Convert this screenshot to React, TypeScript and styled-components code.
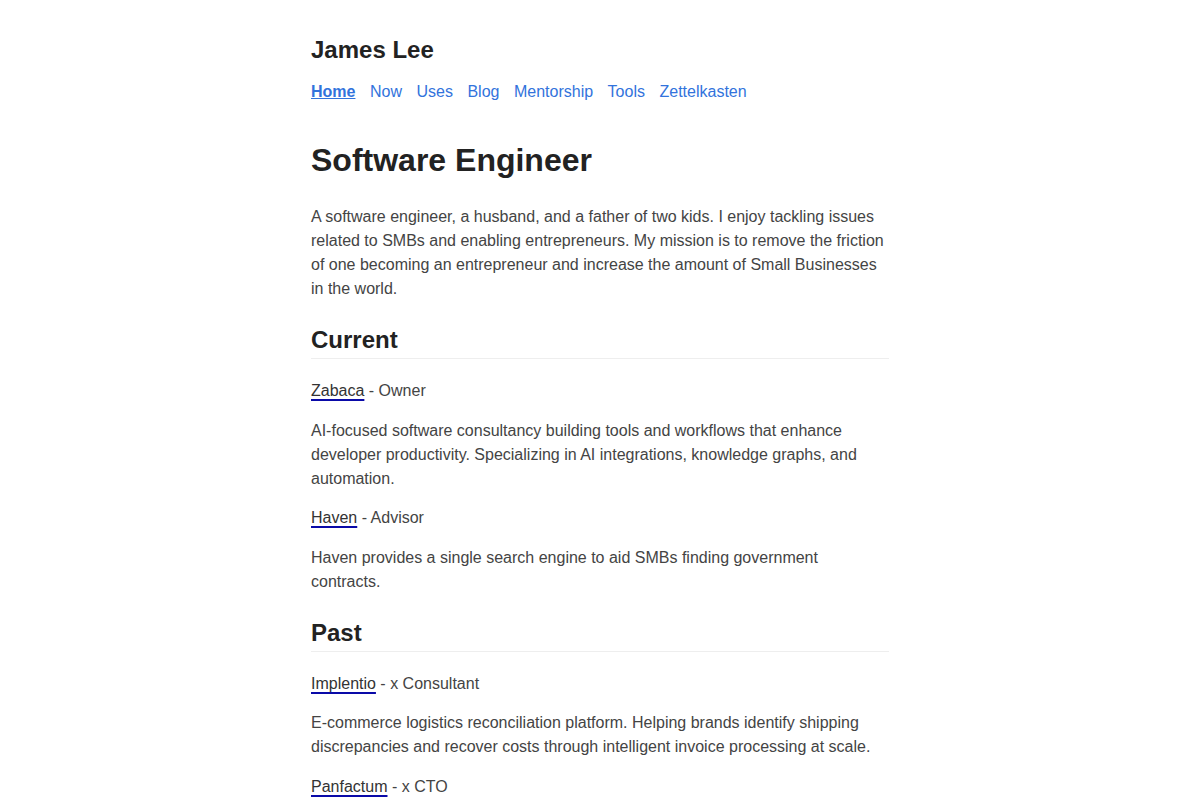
import React from 'react'
import styled, { createGlobalStyle } from 'styled-components'

const GlobalStyle = createGlobalStyle`
  html, body {
    margin: 0;
    padding: 0;
    background: #fff;
  }
  body {
    font-family: "Liberation Sans", Arial, Helvetica, sans-serif;
    font-size: 16px;
    line-height: 1.5;
    color: #444;
  }
`

const Page = styled.div`
  width: 578px;
  margin: 0 auto;
  padding: 35px 0 40px;
`

const SiteTitle = styled.div`
  font-size: 24px;
  line-height: 30px;
  font-weight: 700;
  color: #222;
  margin: 0 0 15px;
`

const Nav = styled.nav`
  display: flex;
  gap: 14.5px;
  margin-bottom: 36px;
`

const NavLink = styled.a<{ $active?: boolean }>`
  color: #3273dc;
  font-weight: ${(p) => (p.$active ? 700 : 400)};
  text-decoration: ${(p) => (p.$active ? 'underline' : 'none')};
  line-height: 24px;
`

const Title = styled.h1`
  font-size: 32px;
  line-height: 40px;
  font-weight: 700;
  color: #222;
  margin: 0 0 25px;
`

const Paragraph = styled.p`
  margin: 0 0 15.5px;
`

const Section = styled.h2`
  font-size: 24px;
  line-height: 30px;
  font-weight: 700;
  color: #222;
  margin: 24px 0 20px;
  padding-bottom: 3px;
  border-bottom: 1px solid #eee;
`

const Company = styled.a`
  color: #333;
  text-decoration: underline;
  text-decoration-color: #0a0aa8;
  text-decoration-thickness: 2px;
  text-underline-offset: 3px;
  text-decoration-skip-ink: none;
`

type Role = { name: string; role: string; text: string }

const current: Role[] = [
  {
    name: 'Zabaca',
    role: 'Owner',
    text: 'AI-focused software consultancy building tools and workflows that enhance developer productivity. Specializing in AI integrations, knowledge graphs, and automation.',
  },
  {
    name: 'Haven',
    role: 'Advisor',
    text: 'Haven provides a single search engine to aid SMBs finding government contracts.',
  },
]

const past: Role[] = [
  {
    name: 'Implentio',
    role: 'x Consultant',
    text: 'E-commerce logistics reconciliation platform. Helping brands identify shipping discrepancies and recover costs through intelligent invoice processing at scale.',
  },
  {
    name: 'Panfactum',
    role: 'x CTO',
    text: 'Open-source platform engineering framework for deploying infrastructure on AWS with Kubernetes and Terraform.',
  },
]

const navItems = ['Home', 'Now', 'Uses', 'Blog', 'Mentorship', 'Tools', 'Zettelkasten']

const RoleList = ({ items }: { items: Role[] }) => (
  <>
    {items.map((r) => (
      <React.Fragment key={r.name}>
        <Paragraph>
          <Company href="#">{r.name}</Company> - {r.role}
        </Paragraph>
        <Paragraph>{r.text}</Paragraph>
      </React.Fragment>
    ))}
  </>
)

export default function App() {
  return (
    <>
      <GlobalStyle />
      <Page>
        <SiteTitle>James Lee</SiteTitle>
        <Nav>
          {navItems.map((n, i) => (
            <NavLink key={n} href="#" $active={i === 0}>
              {n}
            </NavLink>
          ))}
        </Nav>
        <Title>Software Engineer</Title>
        <Paragraph>
          A software engineer, a husband, and a father of two kids. I enjoy tackling issues
          related to SMBs and enabling entrepreneurs. My mission is to remove the friction of
          one becoming an entrepreneur and increase the amount of Small Businesses in the world.
        </Paragraph>
        <Section>Current</Section>
        <RoleList items={current} />
        <Section>Past</Section>
        <RoleList items={past} />
      </Page>
    </>
  )
}
